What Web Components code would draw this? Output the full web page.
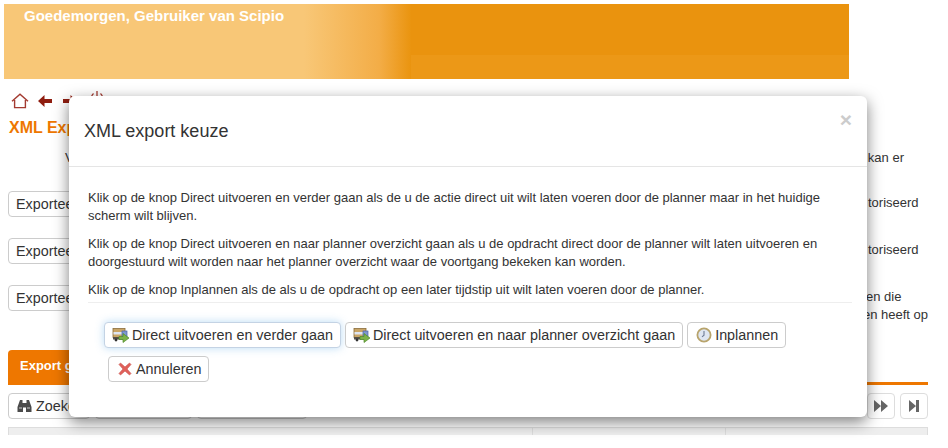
<!DOCTYPE html>
<html>
<head>
<meta charset="utf-8">
<title>XML export</title>
<style>
  html, body { margin: 0; padding: 0; background: #fff; height: 100%; overflow: hidden; }
  body { font-family: "Liberation Sans", Arial, sans-serif; font-size: 13px; color: #333; }
  .page-title { margin: 8px 0 0 9px; height: 18px; line-height: 18px; color: #ee7700; font-size: 16px; font-weight: bold; }
  .intro { display: flex; justify-content: space-between; margin: 12px 0 0 65px; width: 839px; height: 42px; line-height: 18px; }
</style>
</head>
<body>
<script>
class PageBanner extends HTMLElement {
  constructor() {
    super();
    this.attachShadow({ mode: 'open' }).innerHTML = `
      <style>
        :host {
          display: block;
          margin: 4px 0 0 4px;
          width: 845px;
          height: 75px;
          box-sizing: border-box;
          padding: 4px 0 0 20px;
          color: #fff;
          font-size: 15px;
          font-weight: bold;
          line-height: 16px;
          background:
            linear-gradient(90deg, #f8c777 300px, #f3ad47 375px, #ea940f 407px, transparent 407px),
            linear-gradient(180deg, #ea930e 51px, #ec9817 51px);
        }
      </style>
      <slot></slot>`;
  }
}

class NavIcons extends HTMLElement {
  constructor() {
    super();
    this.attachShadow({ mode: 'open' }).innerHTML = `
      <style>
        :host { display: flex; gap: 9px; align-items: center; height: 20px; margin: 12px 0 0 11px; }
        svg { display: block; }
        .power { margin: -6px 0 0 4px; }
      </style>
      <svg width="18" height="16" viewBox="0 0 18 16" fill="none" stroke="#a33a30" stroke-width="1.4">
        <path d="M1 8.2 9 1.2l8 7M3.600 7v7.600h10.800V7"/>
      </svg>
      <svg width="15" height="14" viewBox="0 0 15 14" fill="#8f1d10"><path d="M0 7 6.500 1v4H14v4H6.500v4z"/></svg>
      <svg width="15" height="14" viewBox="0 0 15 14" fill="#8f1d10"><path d="M15 7 8.500 1v4H1v4h7.500v4z"/></svg>
      <svg class="power" width="14" height="14" viewBox="0 0 14 14" fill="none" stroke="#a33a30" stroke-width="1.3"><path d="M7 0v6M3.500 2.500a5.500 5.500 0 1 0 7 0"/></svg>`;
  }
}

class PlainButton extends HTMLElement {
  constructor() {
    super();
    this.attachShadow({ mode: 'open' }).innerHTML = `
      <style>
        :host {
          display: inline-flex;
          align-items: center;
          gap: 2px;
          box-sizing: border-box;
          height: 26px;
          padding: 0 7px;
          border: 1px solid #ccc;
          border-radius: 4px;
          background: #fff;
          color: #333;
          font-size: 14.35px;
          white-space: nowrap;
        }
        :host([focused]) {
          border-color: #c4d3e4;
          box-shadow: 0 0 8px rgba(102,175,233,.45);
        }
        ::slotted(svg) { display: block; flex: none; }
      </style>
      <slot></slot>`;
  }
}

class BackRow extends HTMLElement {
  constructor() {
    super();
    this.attachShadow({ mode: 'open' }).innerHTML = `
      <style>
        :host { display: flex; justify-content: space-between; align-items: flex-start; height: 47px; margin-left: 8px; width: 920px; }
        .note { padding-top: 3px; font-size: 13px; line-height: 18px; white-space: nowrap; width: 60px; }
      </style>
      <plain-button>Exporteer</plain-button>
      <div class="note"><slot></slot></div>`;
  }
}

class ExportTab extends HTMLElement {
  constructor() {
    super();
    this.attachShadow({ mode: 'open' }).innerHTML = `
      <style>
        :host { display: block; margin: 18px 0 0 8px; width: 920px; height: 32px; border-bottom: 3px solid #ee7700; }
        .tab {
          width: 150px; height: 35px; box-sizing: border-box; padding: 8px 12px;
          background: #ee7700; color: #fff; font-size: 13px; font-weight: bold;
          line-height: 16px; border-radius: 4px 4px 0 0; white-space: nowrap;
        }
      </style>
      <div class="tab"><slot></slot></div>`;
  }
}

class GridToolbar extends HTMLElement {
  constructor() {
    super();
    this.attachShadow({ mode: 'open' }).innerHTML = `
      <style>
        :host { display: flex; justify-content: space-between; margin: 8px 0 0 8px; width: 920px; }
        .group { display: flex; gap: 5px; }
        .zoek { width: 82px; padding-left: 8px; gap: 4px; }
        .w1 { width: 97px; }
        .w2 { width: 110px; }
        .ico { width: 28px; padding: 0; justify-content: center; border-color: #ddd; }
      </style>
      <div class="group">
        <plain-button class="zoek">
          <svg width="15" height="14" viewBox="0 0 15 14" fill="#4a4a4a"><path d="M3 1h2.500v3h4V1H12l2.500 7v5H9V8.500H6V13H.5V8z"/><path d="M2 9h3M10 9h3" stroke="#ccc"/></svg>
          Zoeken
        </plain-button>
        <plain-button class="w1"></plain-button>
        <plain-button class="w2"></plain-button>
      </div>
      <div class="group">
        <plain-button class="ico"><svg width="14" height="12" viewBox="0 0 14 12" fill="#666"><path d="M0 0l7 6-7 6zM7 0l7 6-7 6z"/></svg></plain-button>
        <plain-button class="ico"><svg width="10" height="12" viewBox="0 0 10 12" fill="#666"><path d="M0 0l7 6-7 6zM7 0h3v12H7z"/></svg></plain-button>
      </div>`;
  }
}

class GridHead extends HTMLElement {
  constructor() {
    super();
    this.attachShadow({ mode: 'open' }).innerHTML = `
      <style>
        :host { display: grid; grid-template-columns: 523px 193px 1fr; margin: 8px 0 0 8px; width: 920px; height: 8px; box-sizing: border-box; background: #eee; border: 1px solid #ddd; border-bottom: 0; }
        div + div { border-left: 1px solid #ddd; }
      </style>
      <div></div><div></div><div></div>`;
  }
}

class ModalDialog extends HTMLElement {
  constructor() {
    super();
    this.attachShadow({ mode: 'open' }).innerHTML = `
      <style>
        :host {
          position: absolute;
          left: 69px;
          top: 96px;
          width: 798px;
          height: 321px;
          display: flex;
          flex-direction: column;
          background: #fff;
          border-radius: 6px;
          box-shadow: 0 5px 15px rgba(0,0,0,.5);
          color: #333;
        }
        header {
          position: relative;
          height: 71px;
          box-sizing: border-box;
          padding: 25px 15px 0;
          border-bottom: 1px solid #e5e5e5;
          font-size: 18px;
          line-height: 20px;
        }
        .close {
          position: absolute;
          right: 15px;
          top: 13px;
          font-size: 21px;
          font-weight: bold;
          line-height: 21px;
          color: #ccc;
        }
        .body {
          padding: 22px 15px 0 19px;
          font-size: 13px;
          line-height: 18px;
        }
        ::slotted(p) { margin: 0 0 10px; }
        ::slotted(p:last-of-type) { margin-bottom: 3px; }
        footer {
          margin: 0 15px 0 19px;
          padding: 19px 0 0 16px;
          border-top: 1px solid #eee;
          display: flex;
          flex-wrap: wrap;
          gap: 8px 4px;
        }
      </style>
      <header><slot name="title"></slot><span class="close">×</span></header>
      <div class="body"><slot></slot></div>
      <footer><slot name="actions"></slot></footer>`;
  }
}

customElements.define('page-banner', PageBanner);
customElements.define('nav-icons', NavIcons);
customElements.define('plain-button', PlainButton);
customElements.define('back-row', BackRow);
customElements.define('export-tab', ExportTab);
customElements.define('grid-toolbar', GridToolbar);
customElements.define('grid-head', GridHead);
customElements.define('modal-dialog', ModalDialog);
</script>

<page-banner>Goedemorgen, Gebruiker van Scipio</page-banner>
<nav-icons></nav-icons>
<div class="page-title">XML Export</div>
<div class="intro"><span>V</span><span>kan er</span></div>
<back-row>toriseerd</back-row>
<back-row>toriseerd</back-row>
<back-row><span style="margin-left:-2px">en die</span><br><span style="margin-left:-5px">en heeft op</span></back-row>
<export-tab>Export gegevens</export-tab>
<grid-toolbar></grid-toolbar>
<grid-head></grid-head>

<modal-dialog>
  <span slot="title">XML export keuze</span>
  <p>Klik op de knop Direct uitvoeren en verder gaan als de u de actie direct uit wilt laten voeren door de planner maar in het huidige scherm wilt blijven.</p>
  <p>Klik op de knop Direct uitvoeren en naar planner overzicht gaan als u de opdracht direct door de planner wilt laten uitvoeren en doorgestuurd wilt worden naar het planner overzicht waar de voortgang bekeken kan worden.</p>
  <p>Klik op de knop Inplannen als de als u de opdracht op een later tijdstip uit wilt laten voeren door de planner.</p>
  <plain-button slot="actions" focused><svg width="18" height="16" viewBox="0 0 18 16"><use href="#t"/></svg>Direct uitvoeren en verder gaan</plain-button>
  <plain-button slot="actions"><svg width="18" height="16" viewBox="0 0 18 16"><use href="#t"/></svg>Direct uitvoeren en naar planner overzicht gaan</plain-button>
  <plain-button slot="actions">
    <svg width="18" height="16" viewBox="-1 0 18 16"><circle cx="8" cy="8" r="6.600" fill="#dfe6f2" stroke="#b8a46c" stroke-width="1.800"/><path d="M8 4v4.300l-2 1.600" fill="none" stroke="#6d7b95" stroke-width="1.100"/></svg>
    Inplannen
  </plain-button>
  <plain-button slot="actions" style="margin-left:4px">
    <svg width="18" height="16" viewBox="-1 0 18 16"><path d="M2 3.500 3.500 2 8 6l4.500-4L14 3.500 10 8l4 4.500-1.500 1.500L8 10l-4.500 4L2 12.500 6 8z" fill="#e0605a" stroke="#c9504a" stroke-width=".6"/></svg>
    Annuleren
  </plain-button>
</modal-dialog>

<svg width="0" height="0" style="position:absolute">
  <defs>
    <g id="t">
      <rect x="1" y="1.500" width="12" height="9" fill="#c9a566" stroke="#8a6d3b" stroke-width=".8"/>
      <rect x="1.500" y="5" width="11" height="2.500" fill="#dfe6f2"/>
      <rect x="10" y="4" width="5" height="6" fill="#7f97cf" stroke="#4a63a5" stroke-width=".7"/>
      <rect x="1" y="10" width="11" height="2.500" fill="#55504a"/>
      <circle cx="4" cy="13" r="1.400" fill="#333"/>
      <path d="M7 9.500h4V6.500l6 4.500-6 4.500v-3H7z" fill="#7db24a" stroke="#4f8a2a" stroke-width=".7"/>
    </g>
  </defs>
</svg>
</body>
</html>
